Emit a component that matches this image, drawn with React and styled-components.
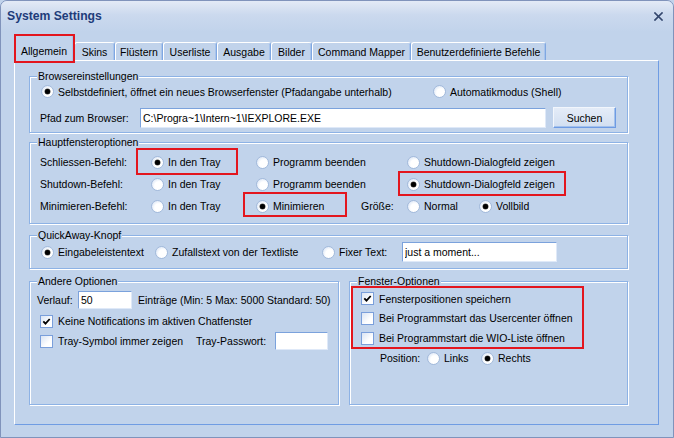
import React from 'react';
import styled, { createGlobalStyle } from 'styled-components';

const BG = '#c1d3eb';
const RED = '#e3161e';

const Global = createGlobalStyle`
  html, body { margin: 0; padding: 0; background: ${BG}; }
  body { font-family: "Liberation Sans", Arial, sans-serif; font-size: 10.5px; color: #000; }
  *, *::before, *::after { box-sizing: border-box; }
`;

const Window = styled.div`
  width: 674px;
  height: 438px;
  display: flex;
  flex-direction: column;
  background: ${BG};
  border: 1px solid #8093bb;
  border-radius: 7px 7px 0 0;
  overflow: hidden;
`;

const TitleBar = styled.div`
  height: 31px;
  flex: none;
  display: flex;
  align-items: center;
  justify-content: space-between;
  padding: 0 10px 1px 6px;
  background: linear-gradient(#e3eaf6, #cbd9ee 45%, ${BG});
`;

const Title = styled.div`
  font-weight: bold;
  font-size: 12.2px;
  color: #1e3c7a;
`;

const Close = styled.button`
  border: 0;
  background: none;
  padding: 0;
  width: 9px;
  height: 9px;
  display: flex;
`;

const Body = styled.div`
  padding-left: 13px;
  display: flex;
  flex-direction: column;
`;

const TabStrip = styled.div`
  height: 28px;
  display: flex;
  align-items: flex-end;
`;

const Tab = styled.div`
  position: relative;
  flex: none;
  width: ${p => p.$w}px;
  height: ${p => (p.$active ? 27 : 18)}px;
  margin-bottom: ${p => (p.$active ? -1 : 0)}px;
  z-index: ${p => (p.$active ? 2 : 1)};
  background: ${BG};
  border-top: 1px solid #fff;
  border-left: 1px solid #fff;
  border-right: 1px solid #7fa7e1;
  box-shadow: inset -1px 0 0 #a8c4ec;
  border-radius: 3px 3px 0 0;
  display: flex;
  align-items: center;
  justify-content: center;
  padding-top: ${p => (p.$active ? 5 : 1)}px;
  white-space: nowrap;
`;

const Panel = styled.div`
  width: 645px;
  height: 365px;
  border-top: 1px solid #fff;
  border-left: 1px solid #fff;
  border-right: 1px solid #6f9ce3;
  border-bottom: 1px solid #6f9ce3;
  padding: 15px 0 0 14px;
  display: flex;
  flex-direction: column;
`;

const Group = styled.div`
  position: relative;
  flex: none;
  width: ${p => p.$w}px;
  height: ${p => p.$h}px;
  margin-top: ${p => p.$mt || 0}px;
  padding-top: ${p => p.$pt || 0}px;
  border: 1px solid #8db2e5;
  box-shadow: inset 1px 1px 0 #fff, 1px 1px 0 #fff;
  display: flex;
  flex-direction: column;
`;

const Legend = styled.span`
  position: absolute;
  top: -7px;
  left: 7px;
  padding: 0 1px;
  background: ${BG};
  line-height: 12px;
  white-space: nowrap;
`;

const BottomRow = styled.div`
  display: flex;
  gap: 10px;
  margin-top: 12px;
`;

const Row = styled.div`
  display: flex;
  align-items: center;
  flex: none;
  height: ${p => p.$h}px;
  margin-top: ${p => p.$mt || 0}px;
  padding-left: ${p => p.$pl || 0}px;
`;

const Marked = styled.div`
  position: relative;
  display: flex;
  flex-direction: column;
`;

const Option = styled.label`
  position: relative;
  display: flex;
  align-items: center;
  gap: ${p => (p.$check ? 5 : 4)}px;
  height: 100%;
  flex: none;
  width: ${p => (p.$w ? `${p.$w}px` : 'auto')};
  white-space: nowrap;
`;

const Label = styled.span`
  flex: none;
  width: ${p => (p.$w ? `${p.$w}px` : 'auto')};
  margin-left: ${p => p.$ml || 0}px;
  white-space: nowrap;
`;

const Mark = styled.span`
  position: absolute;
  left: ${p => p.$l}px;
  top: ${p => p.$t}px;
  width: ${p => p.$w}px;
  height: ${p => p.$h}px;
  border: 2px solid ${RED};
  pointer-events: none;
  z-index: 5;
`;

const RadioCircle = styled.span`
  width: 13px;
  height: 13px;
  flex: none;
  border-radius: 50%;
  border: 1px solid #a3badb;
  background: radial-gradient(circle at 62% 62%, #ffffff 0 42%, #e4ecf8 72%, #c9d7ec 100%);
  display: flex;
  align-items: center;
  justify-content: center;
  &::after {
    content: "";
    width: 5px;
    height: 5px;
    border-radius: 50%;
    background: ${p => (p.$on ? '#000' : 'transparent')};
    box-shadow: ${p => (p.$on ? '0 0 0 0.5px #555' : 'none')};
  }
`;

const CheckBox = styled.span`
  width: 13px;
  height: 13px;
  flex: none;
  border: 1px solid #7a9fdb;
  background: linear-gradient(135deg, #dae4f3, #ffffff 65%);
  display: flex;
  align-items: center;
  justify-content: center;
`;

const TextInput = styled.input`
  flex: none;
  width: ${p => p.$w}px;
  height: ${p => p.$h}px;
  border: 1px solid;
  border-color: #7ba2dc #dfe9f8 #dfe9f8 #7ba2dc;
  background: #fff;
  font: inherit;
  color: #000;
  padding: 0 2px;
  outline: none;
`;

const Button = styled.button`
  flex: none;
  width: 63px;
  height: 21px;
  margin-left: 7px;
  padding: 0;
  font: inherit;
  color: #000;
  background: linear-gradient(#e4ecf8, #d2dff1);
  border: 1px solid;
  border-color: #f2f6fc #6e9be3 #6e9be3 #f2f6fc;
  box-shadow: inset -1px -1px 0 #a3c1ec;
`;

const Radio = ({ on, w, children, mark }) => (
  <Option $w={w}>
    <RadioCircle $on={on} />
    <span>{children}</span>
    {mark}
  </Option>
);

const Check = ({ on, w, children }) => (
  <Option $w={w} $check>
    <CheckBox>
      {on && (
        <svg width="9" height="9" viewBox="0 0 9 9">
          <polyline points="1.3,4.3 3.5,6.6 7.7,2" fill="none" stroke="#000" strokeWidth="1.8" />
        </svg>
      )}
    </CheckBox>
    <span>{children}</span>
  </Option>
);

const tabs = [
  ['Allgemein', 60],
  ['Skins', 41],
  ['Flüstern', 48],
  ['Userliste', 54],
  ['Ausgabe', 54],
  ['Bilder', 41],
  ['Command Mapper', 99],
  ['Benutzerdefinierte Befehle', 135],
];

export default function App() {
  return (
    <>
      <Global />
      <Window>
        <TitleBar>
          <Title>System Settings</Title>
          <Close aria-label="close">
            <svg width="9" height="9" viewBox="0 0 9 9">
              <path d="M1 1 L8 8 M8 1 L1 8" stroke="#34476e" strokeWidth="1.7" strokeLinecap="square" />
            </svg>
          </Close>
        </TitleBar>
        <Body>
          <TabStrip>
            {tabs.map(([t, w], i) => (
              <Tab key={t} $w={w} $active={i === 0}>
                {t}
                {i === 0 && <Mark $l={-1} $t={-1} $w={61} $h={29} />}
              </Tab>
            ))}
          </TabStrip>
          <Panel>
            <Group $w={599} $h={57} $pt={6}>
              <Legend>Browsereinstellungen</Legend>
              <Row $h={17} $pl={11}>
                <Radio on w={392}>Selbstdefiniert, öffnet ein neues Browserfenster (Pfadangabe unterhalb)</Radio>
                <Radio>Automatikmodus (Shell)</Radio>
              </Row>
              <Row $h={21} $mt={7} $pl={10}>
                <Label $w={100}>Pfad zum Browser:</Label>
                <TextInput $w={406} $h={20} readOnly defaultValue="C:\Progra~1\Intern~1\IEXPLORE.EXE" />
                <Button>Suchen</Button>
              </Row>
            </Group>

            <Group $w={599} $h={82} $mt={9} $pt={8}>
              <Legend>Hauptfensteroptionen</Legend>
              <Row $h={22} $pl={10}>
                <Label $w={111}>Schliessen-Befehl:</Label>
                <Radio on w={105} mark={<Mark $l={-15} $t={-3} $w={102} $h={27} />}>In den Tray</Radio>
                <Radio w={151}>Programm beenden</Radio>
                <Radio>Shutdown-Dialogfeld zeigen</Radio>
              </Row>
              <Row $h={22} $pl={10}>
                <Label $w={111}>Shutdown-Befehl:</Label>
                <Radio w={105}>In den Tray</Radio>
                <Radio w={151}>Programm beenden</Radio>
                <Radio on mark={<Mark $l={-9} $t={-2} $w={168} $h={25} />}>Shutdown-Dialogfeld zeigen</Radio>
              </Row>
              <Row $h={22} $pl={10}>
                <Label $w={111}>Minimieren-Befehl:</Label>
                <Radio w={105}>In den Tray</Radio>
                <Radio on w={105} mark={<Mark $l={-13} $t={-3} $w={104} $h={25} />}>Minimieren</Radio>
                <Label $w={46}>Größe:</Label>
                <Radio w={72}>Normal</Radio>
                <Radio on>Vollbild</Radio>
              </Row>
            </Group>

            <Group $w={599} $h={34} $mt={11} $pt={6}>
              <Legend>QuickAway-Knopf</Legend>
              <Row $h={20} $pl={11}>
                <Radio on w={114}>Eingabeleistentext</Radio>
                <Radio w={167}>Zufallstext von der Textliste</Radio>
                <Radio w={80}>Fixer Text:</Radio>
                <TextInput $w={155} $h={20} readOnly defaultValue="just a moment..." />
              </Row>
            </Group>

            <BottomRow>
              <Group $w={310} $h={124} $pt={9}>
                <Legend>Andere Optionen</Legend>
                <Row $h={18} $pl={7}>
                  <Label $w={41}>Verlauf:</Label>
                  <TextInput $w={54} $h={18} readOnly defaultValue="50" />
                  <Label $ml={6}>Einträge (Min: 5 Max: 5000 Standard: 50)</Label>
                </Row>
                <Row $h={18} $mt={3} $pl={10}>
                  <Check on>Keine Notifications im aktiven Chatfenster</Check>
                </Row>
                <Row $h={18} $mt={2} $pl={10}>
                  <Check w={156}>Tray-Symbol immer zeigen</Check>
                  <Label $w={79}>Tray-Passwort:</Label>
                  <TextInput $w={53} $h={18} readOnly defaultValue="" />
                </Row>
              </Group>

              <Group $w={279} $h={124} $pt={7}>
                <Legend>Fenster-Optionen</Legend>
                <Marked>
                  <Row $h={19} $pl={11}>
                    <Check on>Fensterpositionen speichern</Check>
                  </Row>
                  <Row $h={20} $pl={11}>
                    <Check>Bei Programmstart das Usercenter öffnen</Check>
                  </Row>
                  <Row $h={20} $pl={11}>
                    <Check>Bei Programmstart die WIO-Liste öffnen</Check>
                  </Row>
                  <Mark $l={1} $t={-3} $w={233} $h={63} />
                </Marked>
                <Row $h={20} $pl={30}>
                  <Label $w={47}>Position:</Label>
                  <Radio w={54}>Links</Radio>
                  <Radio on>Rechts</Radio>
                </Row>
              </Group>
            </BottomRow>
          </Panel>
        </Body>
      </Window>
    </>
  );
}
